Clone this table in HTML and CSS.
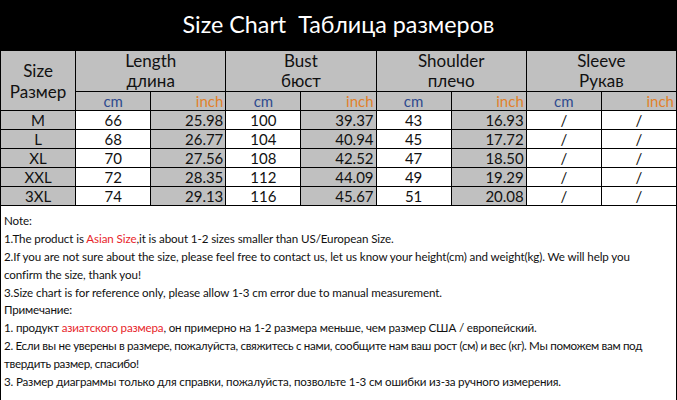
FILE: index.html
```html
<!DOCTYPE html>
<html lang="ru">
<head>
<meta charset="utf-8">
<link rel="stylesheet" href="styles.css">
</head>
<body>
<div class="page">
  <header class="title-bar"><h1 class="title">Size Chart&nbsp; Таблица размеров</h1></header>
  <table class="chart">
    <colgroup>
      <col class="c"><col class="c"><col class="c"><col class="c"><col class="c"><col class="c"><col class="c"><col class="c"><col class="c">
    </colgroup>
    <thead>
      <tr class="head1">
        <th rowspan="2" class="size-head">Size<br>Размер</th>
        <th colspan="2">Length<br>длина</th>
        <th colspan="2">Bust<br>бюст</th>
        <th colspan="2">Shoulder<br>плечо</th>
        <th colspan="2">Sleeve<br>Рукав</th>
      </tr>
      <tr class="units">
        <th class="cm">cm</th><th class="inch">inch</th>
        <th class="cm">cm</th><th class="inch">inch</th>
        <th class="cm">cm</th><th class="inch">inch</th>
        <th class="cm">cm</th><th class="inch">inch</th>
      </tr>
    </thead>
    <tbody>
      <tr><td class="sz">M</td><td>66</td><td class="in">25.98</td><td>100</td><td class="in">39.37</td><td>43</td><td class="in">16.93</td><td>/</td><td>/</td></tr>
      <tr><td class="sz">L</td><td>68</td><td class="in">26.77</td><td>104</td><td class="in">40.94</td><td>45</td><td class="in">17.72</td><td>/</td><td>/</td></tr>
      <tr><td class="sz">XL</td><td>70</td><td class="in">27.56</td><td>108</td><td class="in">42.52</td><td>47</td><td class="in">18.50</td><td>/</td><td>/</td></tr>
      <tr><td class="sz">XXL</td><td>72</td><td class="in">28.35</td><td>112</td><td class="in">44.09</td><td>49</td><td class="in">19.29</td><td>/</td><td>/</td></tr>
      <tr><td class="sz">3XL</td><td>74</td><td class="in">29.13</td><td>116</td><td class="in">45.67</td><td>51</td><td class="in">20.08</td><td>/</td><td>/</td></tr>
    </tbody>
  </table>
  <section class="notes">
    <p>Note:</p>
    <p>1.The product is <span class="red">Asian Size</span>,it is about 1-2 sizes smaller than US/European Size.</p>
    <p>2.If you are not sure about the size, please feel free to contact us, let us know your height(cm) and weight(kg). We will help you<br>confirm the size, thank you!</p>
    <p>3.Size chart is for reference only, please allow 1-3 cm error due to manual measurement.</p>
    <p class="ru">Примечание:</p>
    <p class="ru">1. продукт <span class="red">азиатского размера</span>, он примерно на 1-2 размера меньше, чем размер США / европейский.</p>
    <p class="ru tight">2. Если вы не уверены в размере, пожалуйста, свяжитесь с нами, сообщите нам ваш рост (см) и вес (кг). Мы поможем вам под<br>твердить размер, спасибо!</p>
    <p class="ru">3. Размер диаграммы только для справки, пожалуйста, позвольте 1-3 см ошибки из-за ручного измерения.</p>
  </section>
</div>
</body>
</html>
```

FILE: styles.css
```css
html, body {
  margin: 0;
  padding: 0;
  background: #fff;
}
.page {
  width: 677px;
  font-family: Lato, "Open Sans", sans-serif;
  color: #111;
}
.title-bar {
  background: #000;
  height: 50px;
  display: flex;
  align-items: center;
  justify-content: center;
}
.title {
  margin: 0;
  color: #fff;
  font-weight: 400;
  font-size: 23.3px;
  line-height: 1;
}
.chart {
  width: 677px;
  table-layout: fixed;
  border-collapse: collapse;
  font-size: 15px;
}
.chart th, .chart td {
  border: 1px solid #000;
  padding: 0 2px;
  font-weight: 400;
  text-align: center;
  overflow: hidden;
  white-space: nowrap;
}
.head1 th {
  background: #c0c0c0;
  height: 38px;
  font-size: 17px;
  line-height: 20px;
  vertical-align: top;
}
.head1 .size-head {
  vertical-align: middle;
  line-height: 21px;
}
.units th {
  background: #c0c0c0;
  height: 18px;
  line-height: 18px;
  font-size: 15px;
}
.units .cm { color: #2f4b8f; }
.units .inch { color: #e2802a; text-align: right; }
.chart tbody tr { height: 19.1px; }
.chart td {
  height: 18px;
  line-height: 17px;
  padding-top: 0;
  padding-bottom: 0;
  background: #fff;
}
.chart td.sz { background: #c0c0c0; }
.chart td.in { background: #c0c0c0; text-align: right; }
.notes {
  border: 1px solid #000;
  border-top: 0;
  border-bottom: 0;
  padding: 6px 3px 10px;
  font-size: 11.6px;
  line-height: 17.8px;
  letter-spacing: -0.1px;
  height: 180px;
}
.notes p { margin: 0; white-space: nowrap; }
.notes .ru { letter-spacing: -0.17px; }
.notes .ru.tight { letter-spacing: -0.31px; }
.red { color: #e8262b; }
```
